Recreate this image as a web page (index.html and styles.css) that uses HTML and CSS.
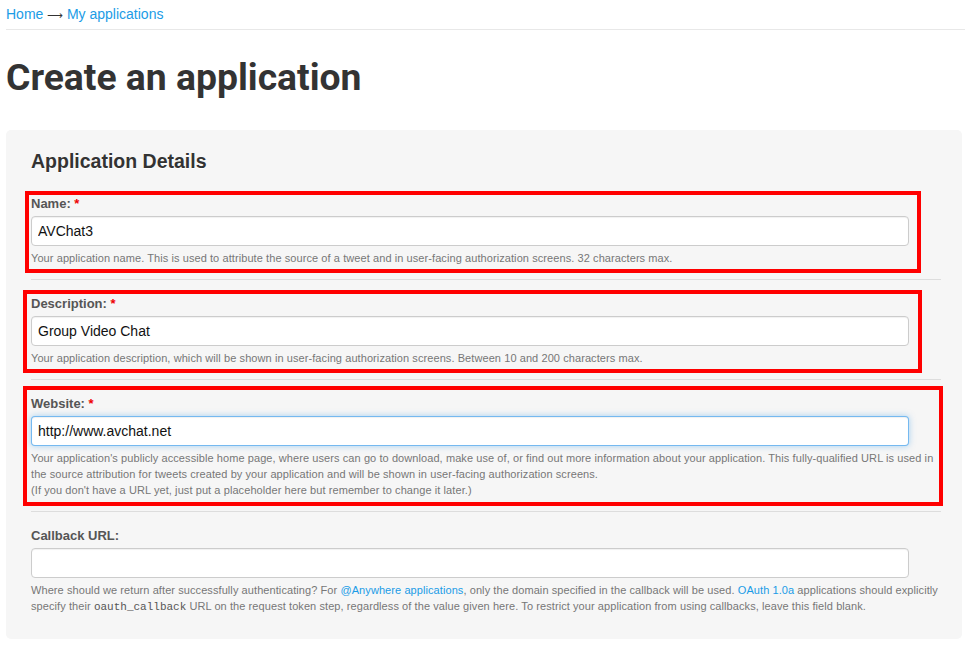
FILE: index.html
```html
<!DOCTYPE html>
<html lang="en">
<head>
<meta charset="utf-8">
<title>Create an application</title>
<link rel="stylesheet" href="styles.css">
</head>
<body>
<div class="page">
  <nav class="crumbs"><a href="#">Home</a> <span class="arrow">&#x27F6;</span> <a href="#">My applications</a></nav>
  <h1 class="title">Create an application</h1>
  <form class="well">
    <h2 class="legend">Application Details</h2>

    <div class="group g-name">
      <label class="label">Name: <span class="req">*</span></label>
      <input class="field" type="text" value="AVChat3">
      <p class="help">Your application name. This is used to attribute the source of a tweet and in user-facing authorization screens. 32 characters max.</p>
      <span class="mark"></span>
    </div>

    <div class="group g-desc">
      <label class="label">Description: <span class="req">*</span></label>
      <input class="field" type="text" value="Group Video Chat">
      <p class="help">Your application description, which will be shown in user-facing authorization screens. Between 10 and 200 characters max.</p>
      <span class="mark"></span>
    </div>

    <div class="group g-web">
      <label class="label">Website: <span class="req">*</span></label>
      <input class="field focus" type="text" value="http://www.avchat.net">
      <p class="help">Your application's publicly accessible home page, where users can go to download, make use of, or find out more information about your application. This fully-qualified URL is used in the source attribution for tweets created by your application and will be shown in user-facing authorization screens.<br>(If you don't have a URL yet, just put a placeholder here but remember to change it later.)</p>
      <span class="mark"></span>
    </div>

    <div class="group last">
      <label class="label">Callback URL:</label>
      <input class="field" type="text" value="">
      <p class="help">Where should we return after successfully authenticating? For <a href="#">@Anywhere applications</a>, only the domain specified in the callback will be used. <a href="#">OAuth 1.0a</a> applications should explicitly specify their <code>oauth_callback</code> URL on the request token step, regardless of the value given here. To restrict your application from using callbacks, leave this field blank.</p>
    </div>
  </form>
</div>
</body>
</html>
```

FILE: styles.css
```css
html, body {
  margin: 0;
  padding: 0;
  background: #fff;
}
body {
  font-family: "Liberation Sans", Arial, sans-serif;
  color: #333;
}
.page {
  margin: 0 6px;
}
.crumbs {
  padding-top: 4px;
  padding-bottom: 5px;
  font-size: 14px;
  line-height: 20px;
  color: #333;
  border-bottom: 1px solid #e8e8e8;
}
.crumbs a {
  color: #1b9ce6;
  text-decoration: none;
}
.arrow {
  font-family: "DejaVu Sans", sans-serif;
  font-size: 11px;
  line-height: 1;
  color: #333;
}
.title {
  margin: 25px 0 31px;
  font-family: Roboto, "Liberation Sans", sans-serif;
  font-weight: 700;
  font-size: 37.3px;
  line-height: 44px;
  color: #333;
}
.well {
  margin: 0 3px 0 0;
  padding: 19px 0 24px 25px;
  background: #f6f6f6;
  border-radius: 5px;
}
.legend {
  margin: 0 0 7px;
  font-size: 19.5px;
  line-height: 24px;
  font-weight: 700;
  color: #333;
  text-shadow: 0 1px 0 #fff;
}
.group {
  position: relative;
  width: 910px;
  padding: 15px 0 13px;
  border-bottom: 1px solid #dddddd;
}
.group.last {
  border-bottom: 0;
  padding-bottom: 0;
}
.label {
  display: block;
  margin-bottom: 3px;
  font-size: 13px;
  line-height: 18px;
  font-weight: 700;
  color: #555;
}
.req {
  color: #e00;
}
.field {
  display: block;
  box-sizing: border-box;
  width: 878px;
  height: 30px;
  margin: 0;
  padding: 0 6px;
  font-family: "Liberation Sans", Arial, sans-serif;
  font-size: 14px;
  color: #111;
  background: #fff;
  border: 1px solid #ccc;
  border-radius: 4px;
  box-shadow: inset 0 1px 1px rgba(0,0,0,0.06);
  outline: none;
}
.field.focus {
  border-color: rgba(82,168,236,0.8);
  box-shadow: inset 0 1px 1px rgba(0,0,0,0.06), 0 0 6px rgba(82,168,236,0.5);
}
.help {
  margin: 4px 0 0;
  font-size: 11px;
  line-height: 16px;
  letter-spacing: 0.08px;
  color: #777;
}
.help a {
  color: #1b9ce6;
  text-decoration: none;
}
.help code {
  font-family: "Liberation Mono", "Courier New", monospace;
  font-size: 11px;
  line-height: 16px;
  letter-spacing: 0;
  color: #555;
}
.mark {
  position: absolute;
  border: 4px solid #ff0000;
  pointer-events: none;
}
.g-name .mark { left: -6px; top: 11px; right: 20px; bottom: 6px; }
.g-desc .mark { left: -8px; top: 10px; right: 19px; bottom: 6px; }
.g-web .mark  { left: -8px; top: 6px;  right: -2px; bottom: 5px; }
```
